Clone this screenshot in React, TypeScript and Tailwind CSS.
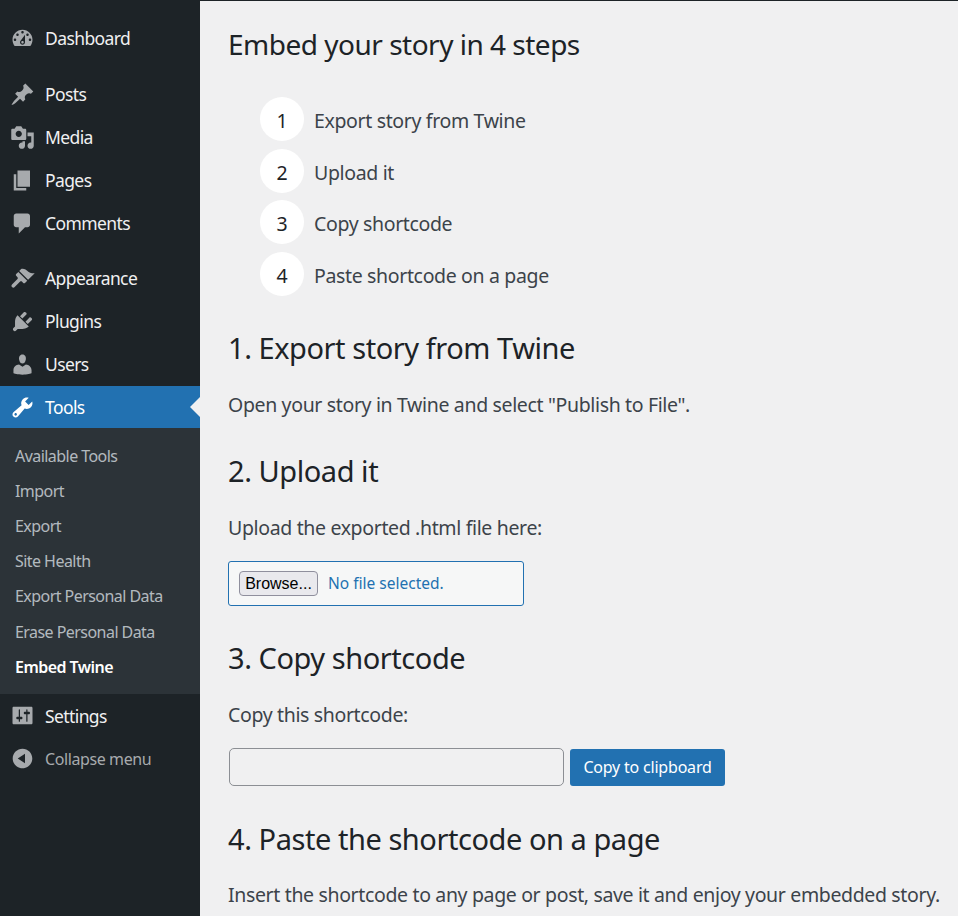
const FONT = "font-['Noto_Sans','Open_Sans',sans-serif]";

const ICONS: Record<string, string> = {
  dashboard:
    "M3.76 16h12.48c1.1-1.37 1.76-3.11 1.76-5 0-4.42-3.58-8-8-8s-8 3.58-8 8c0 1.89.66 3.63 1.76 5zM10 4c.55 0 1 .45 1 1s-.45 1-1 1-1-.45-1-1 .45-1 1-1zM6 6c.55 0 1 .45 1 1s-.45 1-1 1-1-.45-1-1 .45-1 1-1zm8 0c.55 0 1 .45 1 1s-.45 1-1 1-1-.45-1-1 .45-1 1-1zm-5.37 5.55L12 7v6c0 1.1-.9 2-2 2s-2-.9-2-2c0-.57.24-1.08.63-1.45zM4 10c.55 0 1 .45 1 1s-.45 1-1 1-1-.45-1-1 .45-1 1-1zm12 0c.55 0 1 .45 1 1s-.45 1-1 1-1-.45-1-1 .45-1 1-1zm-5 3c0-.55-.45-1-1-1s-1 .45-1 1 .45 1 1 1 1-.45 1-1z",
  posts:
    "M10.44 3.02l1.82-1.82 6.36 6.35-1.83 1.82c-1.05-.68-2.48-.57-3.41.36l-.75.75c-.92.93-1.04 2.35-.35 3.41l-1.83 1.82-2.41-2.41-2.8 2.79c-.42.42-3.38 2.71-3.8 2.29s1.86-3.39 2.28-3.81l2.79-2.79L4.1 9.36l1.83-1.82c1.05.69 2.48.57 3.4-.36l.75-.75c.93-.92 1.05-2.35.36-3.41z",
  media:
    "M13 11V4c0-.55-.45-1-1-1h-1.67L9 1H5L3.67 3H2c-.55 0-1 .45-1 1v7c0 .55.45 1 1 1h10c.55 0 1-.45 1-1zM7 4.500c1.38 0 2.500 1.120 2.500 2.500S8.380 9.500 7 9.500 4.500 8.380 4.500 7 5.620 4.500 7 4.500zM14 6h5v10.500c0 1.380-1.120 2.500-2.500 2.500S14 17.880 14 16.500s1.120-2.500 2.500-2.500c.17 0 .34.02.5.05V9h-3V6zm-4 8.050V13h2v3.500c0 1.380-1.120 2.500-2.500 2.500S7 17.880 7 16.500 8.120 14 9.500 14c.17 0 .34.02.5.05z",
  pages: "M6 15V2h10v13H6zm-1 1h8v2H3V5h2v11z",
  comments:
    "M5 2h9c1.100 0 2 .9 2 2v7c0 1.100-.9 2-2 2h-2l-5 5v-5H5c-1.100 0-2-.9-2-2V4c0-1.100.9-2 2-2z",
  appearance:
    "M14.480 11.060L7.410 3.990l1.500-1.500c.5-.56 2.300-.47 3.510.32 1.210.8 1.430 1.280 2.910 2.100 1.180.64 2.450 1.260 4.450.85zM13.770 11.770L6.700 4.700 4.930 6.470c-.39.39-.39 1.020 0 1.410l1.060 1.060c.39.39.39 1.020 0 1.410L1.600 14.740c-.6.6-.6 1.550 0 2.130s1.530.6 2.130 0l4.390-4.400c.39-.39 1.020-.39 1.410 0l1.060 1.060c.39.39 1.020.39 1.410 0z",
  plugins:
    "M13.110 4.360L9.870 7.600 8 5.730l3.240-3.240c.35-.34 1.050-.2 1.560.32.52.51.66 1.210.31 1.550zm-8 1.770l.91-1.120 9.010 9.010-1.190.84c-.71.71-2.630 1.160-3.820 1.160H6.140L4.900 17.260c-.59.59-1.540.59-2.120 0-.59-.58-.59-1.530 0-2.120l1.240-1.240v-3.880c0-1.130.4-3.190 1.090-3.890zm7.260 3.970l3.240-3.240c.34-.35 1.040-.21 1.550.31.52.51.66 1.210.31 1.550l-3.240 3.250z",
  users:
    "M10 9.250c-2.270 0-2.730-3.440-2.730-3.440C7 4.020 7.820 2 9.970 2c2.160 0 2.980 2.020 2.710 3.810 0 0-.41 3.440-2.680 3.440zm0 2.570L12.720 10c2.390 0 4.520 2.330 4.520 4.530v2.490s-3.650 1.130-7.240 1.130c-3.650 0-7.240-1.130-7.240-1.130v-2.490c0-2.250 1.940-4.480 4.470-4.480z",
  tools:
    "M16.680 9.770c-1.340 1.340-3.300 1.670-4.950.99l-5.410 6.520c-.99.99-2.590.99-3.580 0s-.99-2.590 0-3.570l6.520-5.420c-.68-1.650-.35-3.610.99-4.950 1.280-1.280 3.120-1.620 4.720-1.060l-2.890 2.890 2.820 2.820 2.860-2.870c.53 1.580.18 3.390-1.080 4.650zM3.810 16.210c.4.39 1.040.39 1.430 0 .4-.4.4-1.040 0-1.430-.39-.4-1.030-.4-1.430 0-.39.39-.39 1.030 0 1.430z",
  settings:
    "M18 16V4c0-.55-.45-1-1-1H3c-.55 0-1 .45-1 1v12c0 .55.45 1 1 1h14c.55 0 1-.45 1-1zM8 11h1c.55 0 1 .45 1 1s-.45 1-1 1H8v1.500c0 .28-.22.5-.5.5s-.5-.22-.5-.5V13H6c-.55 0-1-.45-1-1s.45-1 1-1h1V5.500c0-.28.22-.5.5-.5s.5.22.5.5V11zm5-2h-1c-.55 0-1-.45-1-1s.45-1 1-1h1V5.500c0-.28.22-.5.5-.5s.5.22.5.5V7h1c.55 0 1 .45 1 1s-.45 1-1 1h-1v5.500c0 .28-.22.5-.5.5s-.5-.22-.5-.5V9z",
  collapse:
    "M10 2.160c4.330 0 7.840 3.510 7.840 7.840s-3.510 7.840-7.840 7.840S2.160 14.330 2.160 10 5.710 2.160 10 2.160zm2 11.720V6.120L6.180 9.970z",
};

function Icon({ name, active }: { name: string; active?: boolean }) {
  return (
    <span className="flex h-full w-[45px] shrink-0 items-center justify-center">
      <svg
        viewBox="0 0 20 20"
        className={`size-[25px] ${active ? "fill-white" : "fill-[#a7aaad]"}`}
      >
        <path d={ICONS[name]} />
      </svg>
    </span>
  );
}

function MenuItem({ name, label }: { name: string; label: string }) {
  return (
    <li className="flex h-[43px] items-center text-[17.5px] tracking-[-0.6px] text-[#f0f0f1]">
      <Icon name={name} />
      {label}
    </li>
  );
}

const SUBMENU = [
  "Available Tools",
  "Import",
  "Export",
  "Site Health",
  "Export Personal Data",
  "Erase Personal Data",
];

function Sidebar() {
  return (
    <aside className="w-[200px] shrink-0 bg-[#1d2327] pt-[17px]">
      <ul>
        <MenuItem name="dashboard" label="Dashboard" />
        <li className="h-[13px]" />
        <MenuItem name="posts" label="Posts" />
        <MenuItem name="media" label="Media" />
        <MenuItem name="pages" label="Pages" />
        <MenuItem name="comments" label="Comments" />
        <li className="h-[12px]" />
        <MenuItem name="appearance" label="Appearance" />
        <MenuItem name="plugins" label="Plugins" />
        <MenuItem name="users" label="Users" />
        <li className="relative flex h-[42px] items-center bg-[#2271b1] text-[17.5px] tracking-[-0.6px] text-white">
          <Icon name="tools" active />
          Tools
          <span className="absolute right-0 top-1/2 size-0 -translate-y-1/2 border-y-[10px] border-r-[10px] border-y-transparent border-r-[#f0f0f1]" />
        </li>
        <li className="bg-[#2c3338] py-[10px] text-[16px] tracking-[-0.55px] text-[#f0f6fc]/70">
          <ul>
            {SUBMENU.map((item) => (
              <li key={item} className="flex h-[35.2px] items-center pl-[15px]">
                {item}
              </li>
            ))}
            <li className="flex h-[35.2px] items-center pl-[15px] font-semibold text-white">
              Embed Twine
            </li>
          </ul>
        </li>
        <MenuItem name="settings" label="Settings" />
        <li className="flex h-[43px] items-center text-[16px] tracking-[-0.4px] text-[#a7aaad]">
          <Icon name="collapse" />
          Collapse menu
        </li>
      </ul>
    </aside>
  );
}

const STEPS = [
  "Export story from Twine",
  "Upload it",
  "Copy shortcode",
  "Paste shortcode on a page",
];

function Heading({ children }: { children: string }) {
  return (
    <h2 className="h-[40px] text-[29px] leading-[40px] tracking-[-0.45px] text-[#1d2327]">
      {children}
    </h2>
  );
}

function Text({ children }: { children: string }) {
  return <p className="h-[28px] text-[19.5px] leading-[28px] tracking-[-0.35px]">{children}</p>;
}

export default function App() {
  return (
    <div className={`flex h-[916px] w-[958px] overflow-hidden bg-[#f0f0f1] ${FONT}`}>
      <Sidebar />
      <main className="min-w-0 flex-1 border-t border-[#1d2327] pl-[28px] pt-[23px] text-[#3c434a]">
        <h1 className="h-[40px] text-[28px] leading-[40px] tracking-[-0.5px] text-[#1d2327]">
          Embed your story in 4 steps
        </h1>
        <ol className="mt-[33px] flex flex-col gap-[7.7px] pl-[32px]">
          {STEPS.map((step, i) => (
            <li key={step} className="flex items-center gap-[10px] text-[19.5px] tracking-[-0.35px]">
              <span className="flex size-[44px] items-center justify-center rounded-full bg-white pt-[3px] text-[#1d2327]">
                {i + 1}
              </span>
              <span className="pt-[3px]">{step}</span>
            </li>
          ))}
        </ol>

        <div className="mt-[32px]">
          <Heading>1. Export story from Twine</Heading>
        </div>
        <div className="mt-[23px]">
          <Text>Open your story in Twine and select "Publish to File".</Text>
        </div>

        <div className="mt-[32px]">
          <Heading>2. Upload it</Heading>
        </div>
        <div className="mt-[23px]">
          <Text>Upload the exported .html file here:</Text>
        </div>
        <div className="mt-[19px] flex h-[45px] w-[296px] items-center rounded-[3px] border border-[#2271b1] bg-[#f6f7f7] pl-[10px]">
          <button
            type="button"
            className="h-[25px] w-[79px] rounded-[4px] border border-[#8f8f9d] bg-[#e9e9ed] font-['Liberation_Sans',sans-serif] text-[16px] text-black"
          >
            Browse...
          </button>
          <span className="ml-[10px] text-[15.5px] text-[#2271b1]">No file selected.</span>
        </div>

        <div className="mt-[32px]">
          <Heading>3. Copy shortcode</Heading>
        </div>
        <div className="mt-[23px]">
          <Text>Copy this shortcode:</Text>
        </div>
        <div className="mt-[19px] flex items-center gap-[6px] pl-px">
          <input
            type="text"
            aria-label="Shortcode"
            className="h-[38px] w-[335px] rounded-[5px] border border-[#8c8f94] bg-transparent"
          />
          <button
            type="button"
            className="h-[37px] w-[155px] rounded-[3px] bg-[#2271b1] text-[16px] tracking-[-0.2px] text-white"
          >
            Copy to clipboard
          </button>
        </div>

        <div className="mt-[33px]">
          <Heading>4. Paste the shortcode on a page</Heading>
        </div>
        <div className="mt-[22px]">
          <Text>Insert the shortcode to any page or post, save it and enjoy your embedded story.</Text>
        </div>
      </main>
    </div>
  );
}
